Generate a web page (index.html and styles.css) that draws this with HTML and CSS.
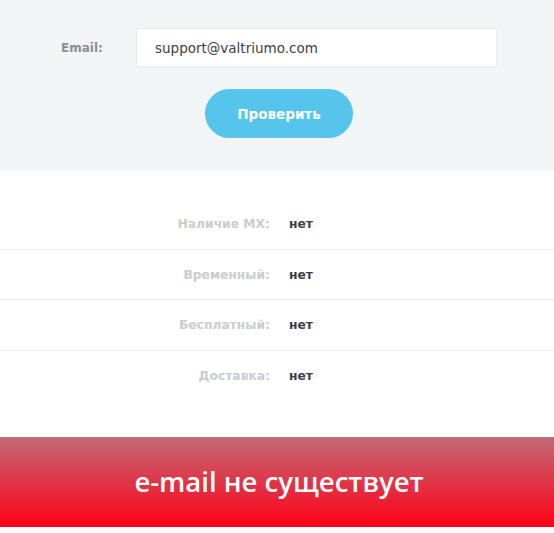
FILE: index.html
```html
<!DOCTYPE html>
<html lang="ru">
<head>
<meta charset="utf-8">
<link rel="stylesheet" href="styles.css">
</head>
<body>
<section class="form">
  <div class="field">
    <label class="field-label">Email:</label>
    <div class="input">support@valtriumo.com</div>
  </div>
  <div class="actions">
    <button class="btn">Проверить</button>
  </div>
</section>
<section class="results">
  <div class="row"><span class="k">Наличие MX:</span><span class="v">нет</span></div>
  <div class="row"><span class="k">Временный:</span><span class="v">нет</span></div>
  <div class="row"><span class="k">Бесплатный:</span><span class="v">нет</span></div>
  <div class="row"><span class="k">Доставка:</span><span class="v">нет</span></div>
</section>
<section class="verdict">e-mail не существует</section>
</body>
</html>
```
FILE: styles.css
```css
html, body { margin: 0; padding: 0; background: #fff; }
body { font-family: "DejaVu Sans", sans-serif; width: 554px; }
.form { background: #f2f5f6; height: 170px; box-sizing: border-box; padding-top: 28px; }
.field { display: flex; align-items: center; }
.field-label { width: 136px; box-sizing: border-box; padding-left: 61px; font-size: 12px; font-weight: 600; color: #8a8e92; }
.input { width: 361px; height: 39px; box-sizing: border-box; background: #fff; border: 1px solid #e7ebee; padding-left: 18px; display: flex; align-items: center; font-size: 13.5px; color: #3d4045; }
.actions { display: flex; justify-content: center; padding-top: 22px; padding-left: 4px; }
.btn { width: 148px; height: 49px; border: none; border-radius: 25px; background: #56c5ec; color: #fff; font-family: inherit; font-weight: 700; font-size: 13.5px; }
.results { padding-top: 29px; height: 267px; box-sizing: border-box; }
.row { display: flex; height: 50.5px; align-items: center; padding-top: 1px; border-bottom: 1px solid #e9ecee; box-sizing: border-box; font-size: 12.3px; font-weight: 700; }
.row:last-child { border-bottom: none; }
.k { width: 270px; text-align: right; color: #c9ccd0; }
.v { padding-left: 19px; color: #3a3e44; }
.verdict { height: 90px; display: flex; align-items: center; justify-content: center; padding-bottom: 1px; padding-left: 4px; box-sizing: border-box; background: linear-gradient(#c06b78, #ff0016); color: #fff; font-size: 27.5px; font-weight: 600; font-family: "Open Sans", sans-serif; }
```
